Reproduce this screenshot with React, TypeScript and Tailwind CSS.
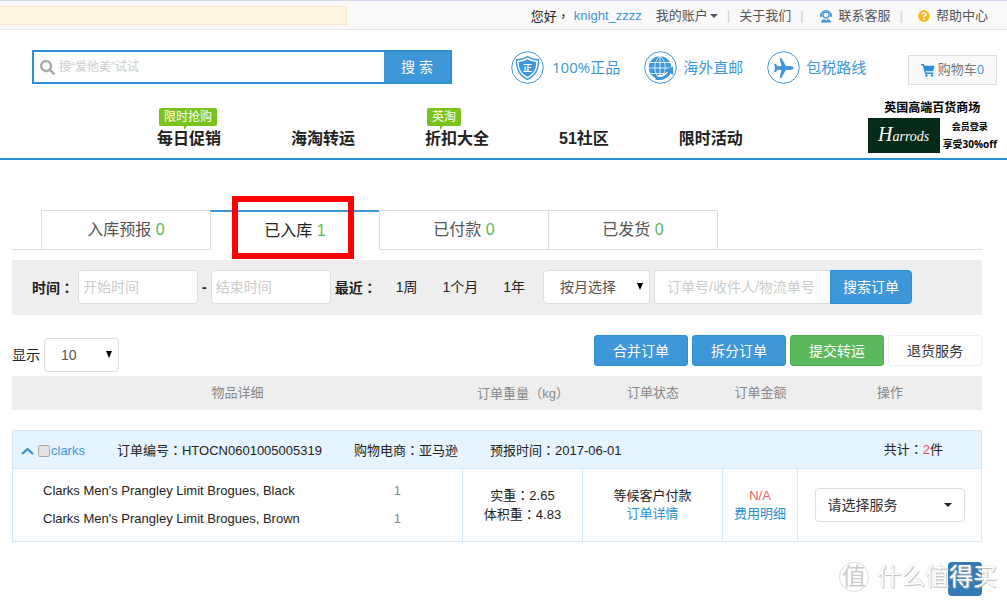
import React, { useState } from 'react'
import { FaQuestionCircle, FaSearch } from 'react-icons/fa'

interface ITab {
  id: string
  nome: string
  total: number
}

const tabs: ITab[] = [
  { id: 'forecast', nome: '入库预报', total: 0 },
  { id: 'stored', nome: '已入库', total: 1 },
  { id: 'paid', nome: '已付款', total: 0 },
  { id: 'shipped', nome: '已发货', total: 0 },
]

const navItems = [
  { nome: '每日促销', tag: '限时抢购' },
  { nome: '海淘转运' },
  { nome: '折扣大全', tag: '英淘' },
  { nome: '51社区' },
  { nome: '限时活动' },
]

const products = [
  { nome: "Clarks Men's Prangley Limit Brogues, Black", qty: 1 },
  { nome: "Clarks Men's Prangley Limit Brogues, Brown", qty: 1 },
]

// full-width punctuation centred in its box
function Punct({ children }: { children: React.ReactNode }) {
  return <span className="font-['Noto_Sans_CJK_TC',sans-serif]">{children}</span>
}

function Caret({ className }: { className?: string }) {
  return (
    <svg viewBox="0 0 8 4" className={`h-1 w-2 ${className ?? ''}`} fill="currentColor" aria-hidden="true">
      <path d="M0 0h8L4 4z" />
    </svg>
  )
}

function SelectArrow() {
  return (
    <svg viewBox="0 0 6 7" className="pointer-events-none absolute top-[13px] right-[7px] h-[7px] w-[6px]" aria-hidden="true">
      <path d="M0 0h6L3 7z" fill="#000" />
    </svg>
  )
}

function ServiceIcon() {
  return (
    <svg viewBox="0 0 14 14" className="h-[14px] w-[14px]" fill="none" aria-hidden="true">
      <path d="M2.2 6.5a4.8 4.8 0 0 1 9.6 0" stroke="#3e97d8" strokeWidth="1.4" />
      <rect x="1" y="4.6" width="2.2" height="3.4" rx="1" fill="#3e97d8" />
      <rect x="10.8" y="4.6" width="2.2" height="3.4" rx="1" fill="#3e97d8" />
      <circle cx="7" cy="6.1" r="3" stroke="#3e97d8" strokeWidth="1.3" />
      <path d="M1.8 13.6c.2-2 1.6-3.2 3.4-3.4L7 11.4l1.8-1.2c1.8.2 3.2 1.4 3.4 3.4z" fill="#3e97d8" />
    </svg>
  )
}

function ShieldIcon() {
  return (
    <svg viewBox="0 0 33 33" className="h-[33px] w-[33px]" fill="none" aria-hidden="true">
      <circle cx="16.5" cy="16.5" r="15.8" stroke="#3e97d8" />
      <path d="M16.5 5.5c2.6 2 6.6 3.2 11 3.2.4 9.2-2.5 15.6-11 19.6C8 24.3 5.1 17.9 5.5 8.7c4.4 0 8.400-1.200 11-3.200z" stroke="#3e97d8" strokeWidth="1.4" />
      <path d="M16.5 8.300c2.300 1.500 5.200 2.400 8.700 2.600.1 7-2.300 11.600-8.700 14.800-6.400-3.200-8.800-7.800-8.700-14.800 3.500-.2 6.400-1.100 8.700-2.600z" fill="#3e97d8" />
      <text x="16.5" y="20" fontSize="9" fontWeight="700" textAnchor="middle" fill="#fff">正</text>
    </svg>
  )
}

function GlobeIcon() {
  return (
    <svg viewBox="0 0 33 33" className="h-[33px] w-[33px]" fill="none" aria-hidden="true">
      <circle cx="16.5" cy="16.5" r="15.8" stroke="#3e97d8" />
      <circle cx="16" cy="16.5" r="11.200" fill="#3e97d8" />
      <g stroke="#fff" strokeWidth="0.8">
        <path d="M5 11.500h22M4 17h24M7 22.500h17M16 5v23" />
        <path d="M16 5c-7 6-7 17 0 23M16 5c7 6 7 17 0 23" />
      </g>
      <path d="M14 26.500c6 .5 10.500-2.500 12.500-7" stroke="#fff" strokeWidth="5" />
      <path d="M11.500 27.300c7 1.200 12-1.800 14.500-7" stroke="#3e97d8" strokeWidth="3" />
      <path d="M20.500 19.500l8.500-4 .5 8.500z" fill="#3e97d8" />
    </svg>
  )
}

function PlaneIcon() {
  return (
    <svg viewBox="0 0 33 33" className="h-[33px] w-[33px]" fill="none" aria-hidden="true">
      <circle cx="16.5" cy="16.5" r="15.8" stroke="#3e97d8" />
      <path
        d="M26.500 17c0-1.200-1.800-1.900-3.800-1.900h-3.900L14.600 7.300h-2l1.900 7.800-3.900.2-2.100-2.600H7l1 4.300-1 4.300h1.500l2.100-2.600 3.900.2-1.900 7.800h2l4.200-7.800h3.900c2 0 3.800-.7 3.800-1.900z"
        fill="#3e97d8"
      />
    </svg>
  )
}

function CartIcon() {
  return (
    <svg viewBox="0 0 14 13" className="h-[13px] w-[14px]" fill="#2a8fd4" aria-hidden="true">
      <path d="M0 0h2.800l.6 1.800H13.500L12.200 7.200H4.800l.3 1.300h7.300v1.400H4L1.800 1.400H0z" />
      <circle cx="5.400" cy="11.500" r="1.200" />
      <circle cx="11" cy="11.500" r="1.200" />
    </svg>
  )
}

function TopBar() {
  return (
    <div className="flex h-[30px] items-center justify-between border-t border-b border-t-[#d0d8ea] border-b-[#e4e4e4] bg-[#f9f9f9] text-[13px] leading-5 text-[#555]">
      <div className="h-[19px] w-[347px] border border-l-0 border-[#fbe8c8] bg-[#fef6e0]" />
      <div className="flex items-center pt-[2px] pr-[19px]">
        <span className="text-[#222]">您好<Punct>，</Punct></span>
        <a href="#user" className="ml-1 text-[#3e97d8]">knight_zzzz</a>
        <button className="ml-[14px] flex items-center gap-[2px]">我的账户<Caret /></button>
        <span className="mx-[9px] text-[#ccc]">|</span>
        <a href="#about">关于我们</a>
        <span className="mx-[9px] text-[#ccc]">|</span>
        <a href="#service" className="ml-[6px] flex items-center gap-[6px]"><ServiceIcon />联系客服</a>
        <span className="mx-[9px] text-[#ccc]">|</span>
        <a href="#help" className="ml-[6px] flex items-center gap-[6px]">
          <FaQuestionCircle className="h-3 w-3 text-[#fbb916]" />帮助中心
        </a>
      </div>
    </div>
  )
}

function Header() {
  return (
    <header className="border-b-2 border-[#2a8fd4] pt-5">
      <div className="flex items-start pr-[10px] pl-8">
        <form className="flex h-[34px] w-[420px] border-2 border-[#2a8fd4]" onSubmit={(e) => e.preventDefault()}>
          <label className="flex flex-1 items-center gap-1 pl-[6px]">
            <FaSearch className="h-[15px] w-[15px] text-[#aaa]" />
            <input aria-label="搜索" placeholder="搜“爱他美”试试" className="min-w-0 flex-1 text-xs outline-none placeholder:text-[#ccc]" />
          </label>
          <button className="w-[66px] bg-[#3e97d8] text-sm text-white">搜 索</button>
        </form>
        <div className="ml-[59px] flex items-center gap-[24px] pt-px font-['Open_Sans','Noto_Sans_CJK_SC',sans-serif] text-[15px] text-[#3e97d8]">
          <a href="#real" className="flex items-center gap-2"><ShieldIcon />100%正品</a>
          <a href="#mail" className="flex items-center gap-[6px]"><GlobeIcon />海外直邮</a>
          <a href="#tax" className="flex items-center gap-[6px]"><PlaneIcon />包税路线</a>
        </div>
        <a href="#cart" className="mt-[5px] ml-auto flex h-[30px] w-[89px] items-center justify-center gap-[3px] border border-[#ddd] bg-[#f9f9f9] text-[13px] text-[#777]">
          <CartIcon />
          <span>购物车<span className="font-['Open_Sans',sans-serif] text-[#3e97d8]">0</span></span>
        </a>
      </div>
      <div className="flex items-end justify-between pt-4 pr-[10px] pb-[5px] pl-[157px]">
        <nav className="mb-1 flex gap-[70px] text-base leading-5 font-bold text-[#222]">
          {navItems.map((item) => (
            <a key={item.nome} href="#nav" className="relative">
              {item.nome}
              {item.tag && (
                <span className="absolute bottom-[23px] left-[2px] rounded-[2px] bg-[#7ac31c] px-[5px] text-xs leading-[18px] font-normal whitespace-nowrap text-white">
                  {item.tag}
                  <svg viewBox="0 0 4 4" className="absolute top-full left-1/2 -ml-1 h-1 w-1" aria-hidden="true">
                    <path d="M0 0h3L0 4z" fill="#7ac31c" />
                  </svg>
                </span>
              )}
            </a>
          ))}
        </nav>
        <a href="#harrods" className="flex flex-col font-bold text-black">
          <span className="text-center text-xs leading-[14px]">英国高端百货商场</span>
          <span className="mt-[3px] flex items-center gap-[3px]">
            <span className="flex h-[35px] w-[72px] items-baseline justify-center bg-[#062a18] font-['Liberation_Serif',serif] text-sm leading-8 font-normal text-white italic">
              <span className="text-xl leading-8">H</span>arrods
            </span>
            <span className="flex flex-col gap-px text-center font-['Open_Sans','Noto_Sans_CJK_SC',sans-serif] text-[10px] leading-4">
              <span className="text-[9px]">会员登录</span>
              <span>享受30%off</span>
            </span>
          </span>
        </a>
      </div>
    </header>
  )
}

function FilterBar() {
  return (
    <form className="mt-[10px] flex items-center bg-[#eee] pt-[10px] pb-[11px] pl-5 text-sm leading-5 text-[#222]" onSubmit={(e) => e.preventDefault()}>
      <label htmlFor="start" className="font-bold">时间<Punct>：</Punct></label>
      <input id="start" placeholder="开始时间" className="ml-1 h-[34px] w-[120px] rounded border border-[#ddd] bg-white px-1 placeholder:text-[#ccc]" />
      <span className="mx-1 font-bold">-</span>
      <input aria-label="结束时间" placeholder="结束时间" className="h-[34px] w-[120px] rounded border border-[#ddd] bg-white px-1 placeholder:text-[#ccc]" />
      <span className="ml-1 font-bold">最近<Punct>：</Punct></span>
      <div className="mr-[18px] ml-[19px] flex gap-[25px]">
        <button type="button">1周</button>
        <button type="button">1个月</button>
        <button type="button">1年</button>
      </div>
      <div className="relative">
        <select aria-label="按月选择" className="h-[34px] w-[107px] appearance-none rounded border border-[#ddd] bg-white pl-4 text-[#555]">
          <option>按月选择</option>
        </select>
        <SelectArrow />
      </div>
      <input aria-label="订单搜索" placeholder="订单号/收件人/物流单号" className="ml-1 h-[34px] w-[176px] rounded-l border border-r-0 border-[#ddd] bg-white pl-3 placeholder:text-[#ccc]" />
      <button className="h-[34px] w-[82px] rounded-r border border-[#2a8fd4] bg-[#3e97d8] text-white">搜索订单</button>
    </form>
  )
}

function Toolbar() {
  return (
    <div className="mt-5 flex items-start justify-between pb-1 text-sm leading-5">
      <label className="mt-[3px] flex items-center gap-1 text-[#222]">
        显示
        <span className="relative">
          <select className="block h-[34px] w-[75px] appearance-none rounded border border-[#ddd] bg-white pl-4 text-[#555]">
            <option>10</option>
          </select>
          <SelectArrow />
        </span>
      </label>
      <div className="flex gap-1">
        <button className="h-[31px] w-[94px] rounded-[3px] border border-[#2a8fd4] bg-[#3e97d8] text-white">合并订单</button>
        <button className="h-[31px] w-[94px] rounded-[3px] border border-[#2a8fd4] bg-[#3e97d8] text-white">拆分订单</button>
        <button className="h-[31px] w-[94px] rounded-[3px] border border-[#4cae4c] bg-[#5cb85c] text-white">提交转运</button>
        <button className="h-[31px] w-[94px] rounded-[3px] border border-[#eee] bg-white text-[#333]">退货服务</button>
      </div>
    </div>
  )
}

function OrderTable() {
  const [open, setOpen] = useState<boolean>(true)

  return (
    <table className="w-full table-fixed border-separate border-spacing-0 text-[13px] leading-[18px] text-[#222]">
      <colgroup>
        <col />
        <col className="w-[120px]" />
        <col className="w-[140px]" />
        <col className="w-[75px]" />
        <col className="w-[184px]" />
      </colgroup>
      <thead>
        <tr className="h-[34px] bg-[#eee] text-[#888]">
          <th className="p-0 font-normal">物品详细</th>
          <th className="p-0 font-normal">订单重量<Punct>（</Punct>kg<Punct>）</Punct></th>
          <th className="p-0 font-normal">订单状态</th>
          <th className="p-0 font-normal">订单金额</th>
          <th className="p-0 font-normal">操作</th>
        </tr>
      </thead>
      <tbody>
        <tr className="h-5"><td colSpan={5} className="p-0" /></tr>
        <tr>
          <td colSpan={5} className="border border-[#d3e9f7] bg-[#e5f4ff] p-0">
            <div className="flex h-[37px] items-center justify-between pr-[38px] pl-2">
              <div className="flex items-center gap-8 pt-[2px]">
                <div className="flex items-center">
                  <button onClick={() => setOpen(!open)} aria-label="展开" className="mr-1">
                    <svg viewBox="0 0 13 8" className="h-2 w-[13px]" fill="none" aria-hidden="true">
                      <path d="M1 7l5.500-5 5.500 5" stroke="#2a8fd4" strokeWidth="2" />
                    </svg>
                  </button>
                  <label className="flex items-center gap-px text-[#3e97d8]">
                    <input type="checkbox" className="h-3 w-3 appearance-none rounded-[2px] border border-[#aaa] bg-[#e4e4e4]" />
                    clarks
                  </label>
                </div>
                <span>订单编号<Punct>：</Punct>HTOCN0601005005319</span>
                <span>购物电商<Punct>：</Punct>亚马逊</span>
                <span>预报时间<Punct>：</Punct>2017-06-01</span>
              </div>
              <span>共计<Punct>：</Punct><span className="text-[#f0484e]">2</span>件</span>
            </div>
          </td>
        </tr>
        {open && (
          <tr className="h-[73px] text-center">
            <td className="border-x border-b border-[#d3e9f7] p-0 text-left leading-7">
              {products.map((product) => (
                <div key={product.nome} className="flex pr-[61px] pl-[30px]">
                  <span className="flex-1">{product.nome}</span>
                  <span className="text-[#888]">{product.qty}</span>
                </div>
              ))}
            </td>
            <td className="border-r border-b border-[#d3e9f7] p-0">
              <p>实重<Punct>：</Punct>2.65</p>
              <p>体积重<Punct>：</Punct>4.83</p>
            </td>
            <td className="border-r border-b border-[#d3e9f7] p-0">
              <p>等候客户付款</p>
              <a href="#detail" className="text-[#2a8fd4]">订单详情</a>
            </td>
            <td className="border-r border-b border-[#d3e9f7] p-0">
              <p className="text-[#f0606a]">N/A</p>
              <a href="#fee" className="text-[#2a8fd4]">费用明细</a>
            </td>
            <td className="border-r border-b border-[#d3e9f7] p-0">
              <div className="relative mx-auto w-[150px]">
                <select aria-label="请选择服务" className="block h-[34px] w-full appearance-none rounded border border-[#ddd] bg-white pl-3 text-sm text-[#333]">
                  <option>请选择服务</option>
                </select>
                <Caret className="pointer-events-none absolute top-[15px] right-[13px]" />
              </div>
            </td>
          </tr>
        )}
      </tbody>
    </table>
  )
}

export default function App() {
  const [currentTab, setCurrentTab] = useState<string>('stored')

  return (
    <div className="bg-white font-['Liberation_Sans','Noto_Sans_CJK_SC',sans-serif]">
      <TopBar />
      <Header />
      <main className="pt-[50px] pr-[25px] pl-3">
        <div className="flex border-b border-[#ddd] pl-[30px]">
          {tabs.map((tab) => (
            <div key={tab.id} className="relative -mb-px -ml-px">
              <button
                onClick={() => setCurrentTab(tab.id)}
                className={
                  tab.id === currentTab
                    ? 'block h-10 w-[170px] border-x border-t-2 border-x-[#ddd] border-t-[#3e97d8] bg-white text-base leading-5 text-[#222]'
                    : 'block h-10 w-[170px] border border-[#ddd] text-base leading-5 text-[#555]'
                }
              >
                {tab.nome} <span className="text-[#5cb85c]">{tab.total}</span>
              </button>
              {tab.id === currentTab && (
                <span className="pointer-events-none absolute -top-[14px] left-[22px] z-10 h-[63px] w-[122px] border-[6px] border-[#f00]" />
              )}
            </div>
          ))}
        </div>
        <FilterBar />
        <Toolbar />
        <OrderTable />
      </main>
      <footer className="relative mt-5 flex h-[34px] items-center justify-end gap-2 pr-[10px] pb-[5px]">
        <button aria-label="返回顶部" className="absolute top-0 right-[25px] h-[34px] w-[34px] rounded bg-[#337ab7]" />
        <span className="relative flex h-[30px] w-[30px] items-center justify-center rounded-full border border-[#ddd] text-2xl leading-7 text-[#ccc]">值</span>
        <span className="pointer-events-none relative text-2xl leading-7 text-white [text-shadow:0_0_1px_#bbb,1px_1px_1px_#bbb]">什么值得买</span>
      </footer>
    </div>
  )
}
